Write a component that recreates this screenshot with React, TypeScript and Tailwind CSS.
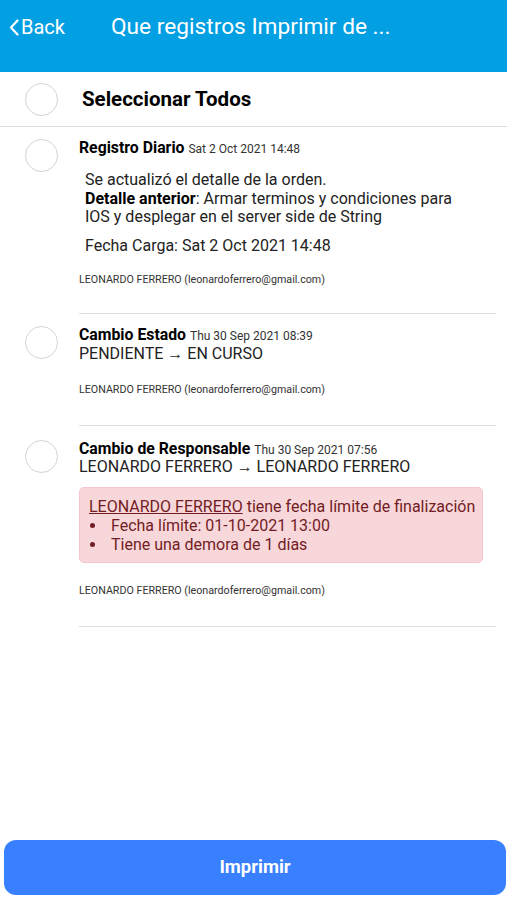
import { ReactNode } from 'react';

const font = { fontFamily: 'Roboto, "Noto Sans", Arial, sans-serif' };

function Circle() {
  return <div className="w-[33px] h-[33px] rounded-full border border-[#d4d4d4] bg-white shrink-0" />;
}

interface ItemProps {
  title: string;
  date: string;
  children: ReactNode;
  author: string;
  gapTop: string;
  authorGap: string;
  lineGap: string;
}

function Item({ title, date, children, author, gapTop, authorGap, lineGap }: ItemProps) {
  return (
    <div className={`flex ${gapTop}`}>
      <div className="w-[79px] shrink-0 pl-[25px]">
        <Circle />
      </div>
      <div className="flex-1 mr-[11px]">
        <div className="leading-[18px] text-black">
          <span className="text-[15.8px] font-bold">{title}</span>{' '}
          <span className="text-[12px] text-[#333]">{date}</span>
        </div>
        {children}
        <div className={`text-[10.7px] leading-[14px] text-[#333] ${authorGap}`}>{author}</div>
        <div className={`h-px bg-[#dcdcdc] ${lineGap}`} />
      </div>
    </div>
  );
}

function Bullet({ children }: { children: ReactNode }) {
  return (
    <div className="flex items-center">
      <span className="w-[5px] h-[5px] rounded-full bg-[#721c24] ml-[1px] mr-[16px] shrink-0" />
      <span>{children}</span>
    </div>
  );
}

export default function App() {
  const author = 'LEONARDO FERRERO (leonardoferrero@gmail.com)';
  return (
    <div className="h-[900px] flex flex-col bg-white" style={font}>
      <div className="h-[72px] bg-[#039fe3] text-white flex items-start pt-[15px] shrink-0">
        <div className="flex items-center pl-[9px] w-[111px] text-[20px] leading-[24px]">
          <svg width="10" height="17" viewBox="0 0 10 17" className="mr-[2px]">
            <path d="M8.5 1.5 L2 8.5 L8.5 15.5" fill="none" stroke="white" strokeWidth="2.2" strokeLinecap="round" strokeLinejoin="round" />
          </svg>
          <span>Back</span>
        </div>
        <div className="text-[22.7px] leading-[24px]">Que registros Imprimir de ...</div>
      </div>

      <div className="h-[55px] flex items-center border-b border-[#dcdcdc] shrink-0">
        <div className="w-[82px] pl-[25px]">
          <Circle />
        </div>
        <span className="text-[20.5px] font-bold text-black">Seleccionar Todos</span>
      </div>

      <div className="flex-1">
        <Item title="Registro Diario" date="Sat 2 Oct 2021 14:48" author={author} gapTop="pt-[12px]" authorGap="mt-[18px]" lineGap="mt-[26px]">
          <div className="pl-[6px] pr-[30px] mt-[13px] text-[16px] leading-[18.5px] text-[#222]">
            <div>Se actualizó el detalle de la orden.</div>
            <div>
              <span className="font-bold text-black">Detalle anterior</span>: Armar terminos y condiciones para IOS y desplegar en el server side de String
            </div>
            <div className="mt-[10px]">Fecha Carga: Sat 2 Oct 2021 14:48</div>
          </div>
        </Item>

        <Item title="Cambio Estado" date="Thu 30 Sep 2021 08:39" author={author} gapTop="pt-[12px]" authorGap="mt-[20px]" lineGap="mt-[28px]">
          <div className="text-[16px] leading-[18px] text-[#222]">PENDIENTE → EN CURSO</div>
        </Item>

        <Item title="Cambio de Responsable" date="Thu 30 Sep 2021 07:56" author={author} gapTop="pt-[14px]" authorGap="mt-[21px]" lineGap="mt-[28px]">
          <div className="text-[16px] leading-[16px] text-[#222]">LEONARDO FERRERO → LEONARDO FERRERO</div>
          <div className="mt-[12px] mr-[13px] bg-[#f8d7da] border border-[#f5c6cb] rounded-[5px] pt-[9px] pb-[8px] pl-[9px] text-[16px] leading-[19px] text-[#721c24]">
            <div>
              <span className="underline">LEONARDO FERRERO</span> tiene fecha límite de finalización
            </div>
            <Bullet>Fecha límite: 01-10-2021 13:00</Bullet>
            <Bullet>Tiene una demora de 1 días</Bullet>
          </div>
        </Item>
      </div>

      <button className="ml-[4px] mr-[1px] mb-[5px] h-[55px] rounded-[12px] bg-[#3880ff] text-white text-[18.5px] font-bold shrink-0">
        Imprimir
      </button>
    </div>
  );
}
